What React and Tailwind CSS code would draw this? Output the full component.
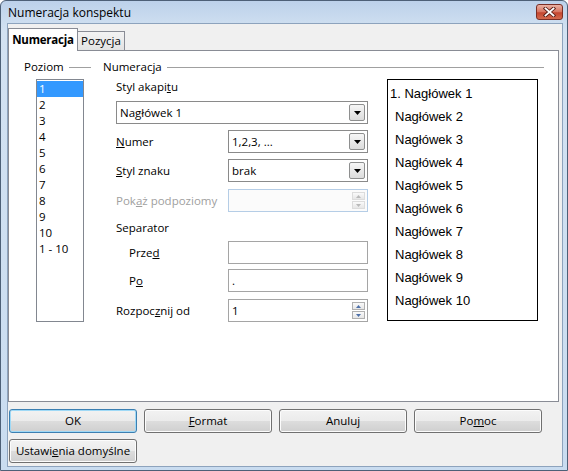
import React from 'react';

const levels = ['1', '2', '3', '4', '5', '6', '7', '8', '9', '10', '1 - 10'];
const preview = ['Nagłówek 2', 'Nagłówek 3', 'Nagłówek 4', 'Nagłówek 5', 'Nagłówek 6', 'Nagłówek 7', 'Nagłówek 8', 'Nagłówek 9', 'Nagłówek 10'];

function DropArrow() {
  return (
    <div className="w-[16px] h-[17px] mr-[2px] border border-[#8e8f8f] rounded-[2px] bg-[linear-gradient(to_bottom,#f6f6f6,#dcdcdc)] flex items-center justify-center">
      <svg width="7" height="4" viewBox="0 0 7 4">
        <path d="M0 0h7L3.5 4z" fill="#000" />
      </svg>
    </div>
  );
}

function Combo({ value, className = '' }) {
  return (
    <div className={`h-[23px] border border-[#8a8a8a] bg-white flex items-center ${className}`}>
      <span className="flex-1 pl-[3px] text-black">{value}</span>
      <DropArrow />
    </div>
  );
}

function Spin({ value, disabled }) {
  const arrow = disabled ? '#b9b9b9' : '#4d6fa8';
  return (
    <div
      className={`w-[140px] h-[23px] border flex items-center ${
        disabled ? 'border-[#b5cde6] bg-[#fbfbfb]' : 'border-[#a5a5a5] bg-white'
      }`}
    >
      <span className="flex-1 pl-[3px] text-black">{value}</span>
      <div className="flex flex-col mr-[2px] gap-[1px]">
        <div className={`w-[13px] h-[8px] border ${disabled ? 'border-[#dcdcdc]' : 'border-[#b0b0b0]'} bg-[linear-gradient(to_bottom,#fafafa,#e6e6e6)] flex items-center justify-center`}>
          <svg width="5" height="3" viewBox="0 0 5 3"><path d="M2.5 0L5 3H0z" fill={arrow} /></svg>
        </div>
        <div className={`w-[13px] h-[8px] border ${disabled ? 'border-[#dcdcdc]' : 'border-[#b0b0b0]'} bg-[linear-gradient(to_bottom,#fafafa,#e6e6e6)] flex items-center justify-center`}>
          <svg width="5" height="3" viewBox="0 0 5 3"><path d="M0 0h5L2.5 3z" fill={arrow} /></svg>
        </div>
      </div>
    </div>
  );
}

function Field({ value }) {
  return (
    <div className="w-[140px] h-[23px] border border-[#a5a5a5] bg-white flex items-center">
      <span className="pl-[3px] text-black">{value}</span>
    </div>
  );
}

function Button({ children, focused, className = '' }) {
  return (
    <button
      className={`w-[128px] h-[24px] rounded-[3px] border text-black flex items-center justify-center bg-[linear-gradient(to_bottom,#f2f2f2_0%,#ebebeb_50%,#dddddd_50%,#cfcfcf_100%)] ${
        focused
          ? 'border-[#3c7fb1] shadow-[inset_0_0_0_1px_#9fd9f6]'
          : 'border-[#707070] shadow-[inset_0_0_0_1px_#fcfcfc]'
      } ${className}`}
    >
      {children}
    </button>
  );
}

function Legend({ children }) {
  return (
    <div className="h-[16px] flex items-center">
      <span className="leading-[16px]">{children}</span>
      <div className="flex-1 ml-[5px] h-px bg-[#a0a0a0]" />
    </div>
  );
}

export default function App() {
  return (
    <div className="w-[568px] h-[471px] flex flex-col border border-[#4d6077] rounded-t-[6px] bg-[linear-gradient(to_bottom,#bcd1ea,#d3e2f2_30px,#c9dcf0)] font-['Open_Sans','Noto_Sans',sans-serif] text-[11.5px] text-black overflow-hidden">
      {/* Title bar */}
      <div className="h-[22px] flex items-center pl-[7px] pr-[4px]">
        <span className="flex-1 text-[12px] pt-[2px]">Numeracja konspektu</span>
        <div className="w-[27px] h-[16px] mt-[-1px] rounded-[3px] border border-[#7b2e25] bg-[linear-gradient(to_bottom,#eab2a4,#d8735f_50%,#c4452f_55%,#d46a4e)] flex items-center justify-center">
          <svg width="13" height="10" viewBox="0 0 13 10">
            <path d="M2.5 1.5L10.5 8.5M10.5 1.5L2.5 8.5" stroke="#5a2019" strokeWidth="3.6" strokeLinecap="square" />
            <path d="M2.5 1.5L10.5 8.5M10.5 1.5L2.5 8.5" stroke="#fff" strokeWidth="1.8" strokeLinecap="square" />
          </svg>
        </div>
      </div>

      {/* Client area */}
      <div className="ml-[6px] mr-[4px] mb-[3px] flex-1 border border-[#8da3bd] bg-[#f0f0f0] flex flex-col">
        {/* Tabs */}
        <div className="mt-[4px] flex items-end h-[22px] relative z-10">
          <div className="w-[70px] h-[23px] -mb-px bg-white border border-b-0 border-[#898c95] font-bold flex items-center justify-center tracking-[-0.2px]">
            Numeracja
          </div>
          <div className="w-[47px] h-[19px] border border-l-0 border-b-0 border-[#898c95] bg-[linear-gradient(to_bottom,#f3f3f3,#e3e3e3)] flex items-center justify-center">
            Pozycja
          </div>
        </div>

        {/* Tab panel */}
        <div className="mr-[3px] h-[352px] border border-[#898c95] bg-white flex pt-[8px] pl-[15px]">
          {/* Poziom */}
          <div className="w-[67px] flex flex-col">
            <Legend>Poziom</Legend>
            <div className="ml-[12px] mt-[4px] w-[48px] h-[243px] border border-[#828790] bg-white pt-px">
              {levels.map((l, i) => (
                <div
                  key={l}
                  className={`h-[16px] leading-[16px] pl-[2px] ${i === 0 ? 'bg-[#3399ff] text-white' : ''}`}
                >
                  {l}
                </div>
              ))}
            </div>
          </div>

          {/* Numeracja */}
          <div className="ml-[12px] w-[441px] flex flex-col">
            <Legend>Numeracja</Legend>
            <div className="mt-[4px] flex">
              <div className="ml-[13px] w-[252px] flex flex-col">
                <div className="h-[16px] leading-[16px]">
                  Styl akapi<span className="underline">t</span>u
                </div>
                <Combo value="Nagłówek 1" className="mt-[6px] w-[252px]" />

                <div className="mt-[6px] flex items-center">
                  <span className="w-[112px]">
                    <span className="underline">N</span>umer
                  </span>
                  <Combo value="1,2,3, ..." className="w-[140px]" />
                </div>

                <div className="mt-[6px] flex items-center">
                  <span className="w-[112px]">
                    <span className="underline">S</span>tyl znaku
                  </span>
                  <Combo value="brak" className="w-[140px]" />
                </div>

                <div className="mt-[7px] flex items-center">
                  <span className="w-[112px] text-[#a0a0a0]">
                    Pok<span className="underline">a</span>ż podpoziomy
                  </span>
                  <Spin value="" disabled />
                </div>

                <div className="mt-[8px] h-[16px] leading-[16px]">Separator</div>

                <div className="mt-[5px] flex items-center">
                  <span className="w-[112px] pl-[13px]">
                    Prze<span className="underline">d</span>
                  </span>
                  <Field value="" />
                </div>

                <div className="mt-[5px] flex items-center">
                  <span className="w-[112px] pl-[13px]">
                    P<span className="underline">o</span>
                  </span>
                  <Field value="." />
                </div>

                <div className="mt-[7px] flex items-center">
                  <span className="w-[112px]">
                    Rozpoc<span className="underline">z</span>nij od
                  </span>
                  <Spin value="1" />
                </div>
              </div>

              {/* Preview */}
              <div className="ml-[19px] w-[151px] h-[242px] border border-black bg-white pt-[2px] font-['Liberation_Sans',Arial,sans-serif] text-[13px] text-black">
                <div className="h-[23px] leading-[23px] pl-[2px]">1. Nagłówek 1</div>
                {preview.map((p) => (
                  <div key={p} className="h-[23px] leading-[23px] pl-[7px]">
                    {p}
                  </div>
                ))}
              </div>
            </div>
          </div>
        </div>

        {/* Buttons */}
        <div className="mt-[7px] ml-px flex gap-[7px]">
          <Button focused>OK</Button>
          <Button>
            <span className="underline">F</span>ormat
          </Button>
          <Button>Anuluj</Button>
          <Button>
            Po<span className="underline">m</span>oc
          </Button>
        </div>
        <div className="mt-[6px] ml-px flex">
          <Button>
            Ustawi<span className="underline">e</span>nia domyślne
          </Button>
        </div>
      </div>
    </div>
  );
}
